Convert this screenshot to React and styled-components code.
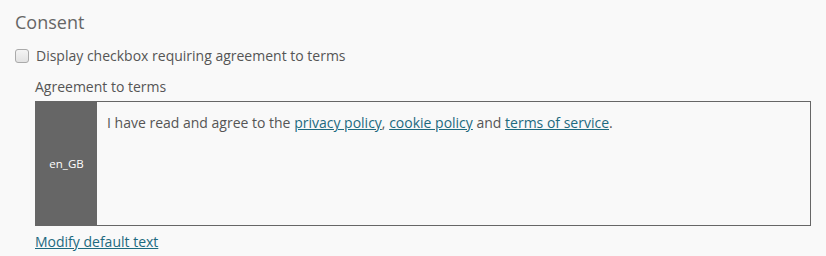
import React from "react";
import styled, { createGlobalStyle } from "styled-components";

const GlobalStyle = createGlobalStyle`
  html, body {
    margin: 0;
    background: #f9f9f9;
    font-family: "Open Sans", "Liberation Sans", sans-serif;
    color: #555;
  }
`;

const Section = styled.div`
  padding: 9px 15px 0 15px;
`;

const Heading = styled.h3`
  margin: 0 0 10px;
  font-size: 18px;
  font-weight: 400;
  color: #666;
  line-height: 27px;
`;

const CheckRow = styled.label`
  display: flex;
  align-items: center;
  gap: 7px;
  font-size: 14px;
  color: #555;
  line-height: 20px;
`;

const Box = styled.span`
  width: 12px;
  height: 12px;
  border: 1px solid #aaa;
  border-radius: 3px;
  background: linear-gradient(#f4f4f4, #e2e2e2);
`;

const Indent = styled.div`
  padding-left: 20px;
`;

const FieldLabel = styled.div`
  font-size: 14px;
  color: #555;
  line-height: 20px;
  margin: 11px 0 4px;
`;

const Editor = styled.div`
  display: flex;
  height: 123px;
  border: 1px solid #666;
  background: #f9f9f9;
`;

const Locale = styled.div`
  width: 61px;
  background: #666;
  color: #fff;
  font-size: 11.5px;
  display: flex;
  align-items: center;
  justify-content: center;
`;

const Content = styled.div`
  flex: 1;
  padding: 11px 10px;
  font-size: 14px;
  line-height: 20px;
  color: #555;
`;

const Link = styled.a`
  color: #1d6a7f;
  text-decoration: underline;
`;

const Modify = styled(Link)`
  display: inline-block;
  font-size: 14px;
  line-height: 20px;
  margin-top: 6px;
`;

export default function App() {
  return (
    <>
      <GlobalStyle />
      <Section>
        <Heading>Consent</Heading>
        <CheckRow>
          <Box />
          Display checkbox requiring agreement to terms
        </CheckRow>
        <Indent>
          <FieldLabel>Agreement to terms</FieldLabel>
          <Editor>
            <Locale>en_GB</Locale>
            <Content>
              I have read and agree to the <Link href="#">privacy policy</Link>,{" "}
              <Link href="#">cookie policy</Link> and{" "}
              <Link href="#">terms of service</Link>.
            </Content>
          </Editor>
          <Modify href="#">Modify default text</Modify>
        </Indent>
      </Section>
    </>
  );
}
